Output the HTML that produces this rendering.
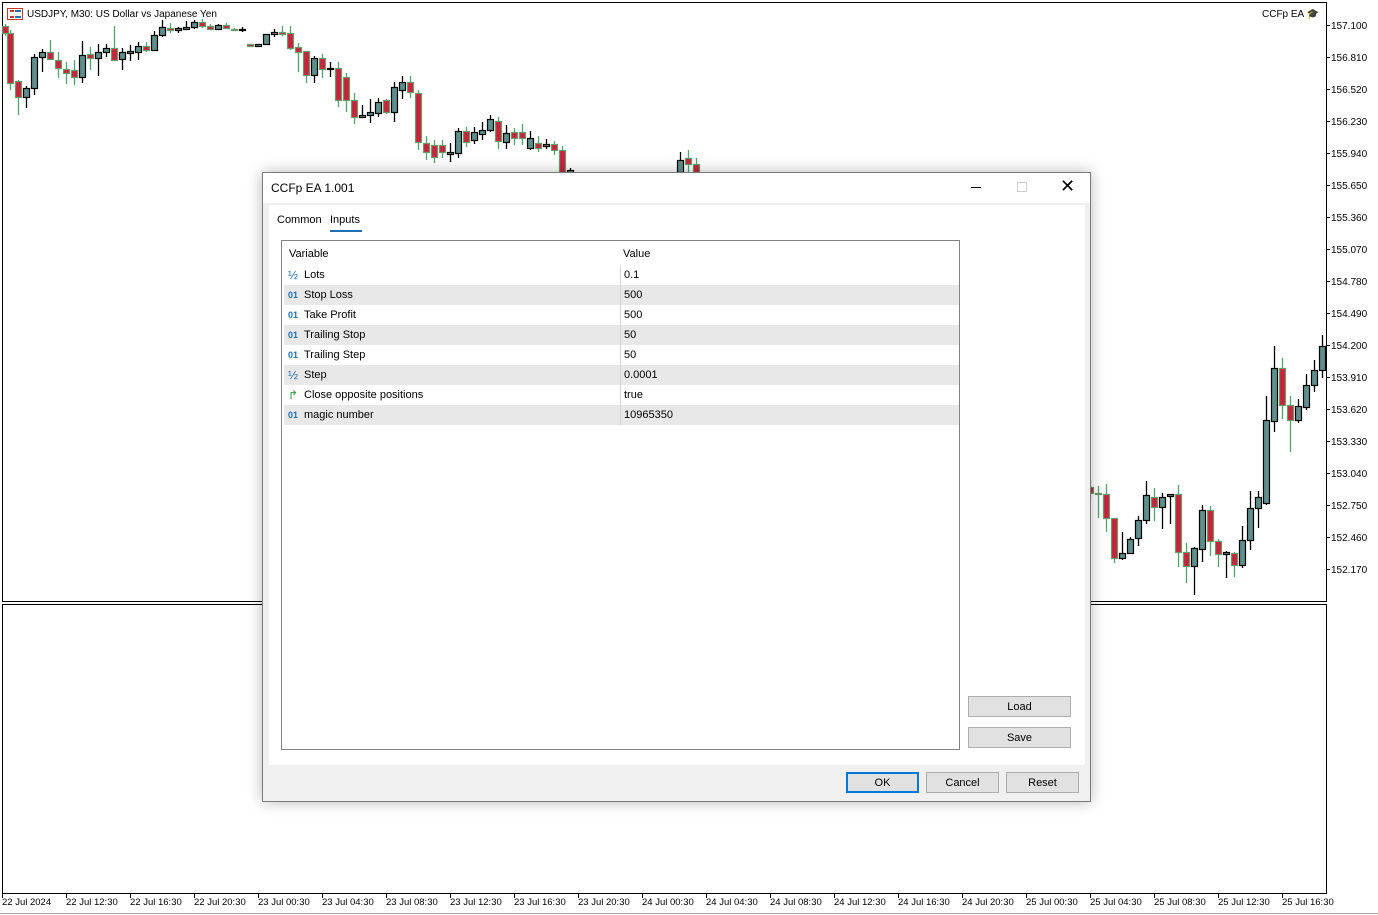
<!DOCTYPE html>
<html><head><meta charset="utf-8"><style>
*{margin:0;padding:0;box-sizing:border-box}
body{width:1378px;height:915px;background:#fff;position:relative;overflow:hidden;font-family:"Liberation Sans",sans-serif;color:#000}
.ax{position:absolute;font-size:10px;line-height:10px}
.dlg{position:absolute;left:262px;top:172px;width:829px;height:630px;background:#f0f0f0;border:1px solid #7a7a7a;box-shadow:0 0 14px rgba(0,0,0,.28)}
.tb{position:absolute;left:0;top:0;right:0;height:30px;background:#fff;font-size:12px}
.inner{position:absolute;left:6px;top:32px;width:816px;height:560px;background:#fff}
.tbl{position:absolute;left:12px;top:35px;width:679px;height:510px;border:1px solid #828282;background:#fff;font-size:11px}
.row{position:absolute;left:2px;width:675px;height:20px;line-height:21px}
.row.g{background:#e8e8e8}
.row span{position:absolute}
.row .v{left:336px;border-left:1px solid #d4d4d4;padding-left:3px;height:20px}
.ic{left:4px;color:#1f6fb5;font-size:9px;font-weight:bold}
.nm{left:20px}
.btn{position:absolute;height:21px;background:#e1e1e1;border:1px solid #adadad;font-size:11px;text-align:center;line-height:20px}
</style></head><body>
<svg width="1378" height="915" style="position:absolute;left:0;top:0">
<rect x="2.5" y="2.5" width="1324" height="599" fill="none" stroke="#000"/>
<rect x="2.5" y="604.5" width="1324" height="289" fill="none" stroke="#000"/>
<line x1="0" y1="913.5" x2="1378" y2="913.5" stroke="#aaa"/>
</svg>
<svg width="1378" height="915" style="position:absolute;left:0;top:0" id="cs"></svg>
<div class="ax" style="left:7px;top:8px;width:16px;height:12px;border:1px solid #c0392b;background:#fff"></div>
<div class="ax" style="left:10px;top:10px;width:4px;height:8px;border-top:2px solid #c0392b;border-bottom:2px solid #c0392b"></div>
<div class="ax" style="left:15px;top:10px;width:6px;height:8px;border-top:2px solid #1f6fb5;border-bottom:2px solid #1f6fb5"></div>
<div class="ax" style="left:27px;top:10px">USDJPY, M30:  US Dollar vs Japanese Yen</div>
<div class="ax" style="left:1262px;top:10px">CCFp EA <span style="color:#bbb">🎓</span></div>
<div id="yaxis"></div>
<div id="xaxis"></div>

<div class="dlg">
<div class="tb"><span style="position:absolute;left:8px;top:8px">CCFp EA 1.001</span>
<span style="position:absolute;left:708px;top:14px;width:10px;border-top:1px solid #000"></span>
<span style="position:absolute;left:754px;top:9px;width:10px;height:10px;border:1px solid #ccc"></span>
<span style="position:absolute;left:797px;top:3px;font-size:18px;font-weight:300">✕</span></div>
<div class="inner">
<span style="position:absolute;left:8px;top:9px;font-size:11px">Common</span>
<span style="position:absolute;left:61px;top:9px;font-size:11px">Inputs</span>
<span style="position:absolute;left:61px;top:25px;width:32px;border-top:2px solid #1f6fb5"></span>
<div class="tbl">
<div class="row" style="top:3px"><span style="left:5px">Variable</span><span class="v" style="border:none">Value</span></div>
<div class="row" style="top:24px"><span class="ic" style="font-size:12px;font-weight:normal">½</span><span class="nm">Lots</span><span class="v">0.1</span></div>
<div class="row g" style="top:44px"><span class="ic">01</span><span class="nm">Stop Loss</span><span class="v">500</span></div>
<div class="row" style="top:64px"><span class="ic">01</span><span class="nm">Take Profit</span><span class="v">500</span></div>
<div class="row g" style="top:84px"><span class="ic">01</span><span class="nm">Trailing Stop</span><span class="v">50</span></div>
<div class="row" style="top:104px"><span class="ic">01</span><span class="nm">Trailing Step</span><span class="v">50</span></div>
<div class="row g" style="top:124px"><span class="ic" style="font-size:12px;font-weight:normal">½</span><span class="nm">Step</span><span class="v">0.0001</span></div>
<div class="row" style="top:144px"><span class="ic" style="color:#2a9a3a;font-size:12px;font-weight:normal">↱</span><span class="nm">Close opposite positions</span><span class="v">true</span></div>
<div class="row g" style="top:164px"><span class="ic">01</span><span class="nm">magic number</span><span class="v">10965350</span></div>
</div>
</div>
<div class="btn" style="left:705px;top:523px;width:103px">Load</div>
<div class="btn" style="left:705px;top:554px;width:103px">Save</div>
<div class="btn" style="left:583px;top:599px;width:73px;border:2px solid #0078d7;line-height:18px">OK</div>
<div class="btn" style="left:663px;top:599px;width:73px">Cancel</div>
<div class="btn" style="left:743px;top:599px;width:73px">Reset</div>
</div>
<script>
var L=[[5,26,33,24,36,'r'],[10,33,83,30,90,'r'],[18,81,97,80,115,'r'],[26,88,97,86,108,'b'],[34,57,88,54,95,'b'],[42,52,57,49,72,'b'],[50,52,59,40,60,'r'],[58,60,68,52,78,'r'],[66,69,73,62,84,'r'],[74,70,77,60,85,'r'],[82,55,77,41,83,'b'],[90,54,58,47,70,'r'],[98,52,58,44,76,'b'],[106,48,52,44,57,'b'],[114,48,60,26,60,'r'],[122,52,59,48,70,'b'],[130,51,53,45,61,'b'],[138,46,52,42,60,'b'],[146,46,50,42,52,'r'],[154,35,50,31,51,'b'],[162,27,35,20,37,'b'],[170,28,30,23,33,'r'],[178,28,30,27,33,'b'],[186,27,29,21,29,'b'],[194,22,27,20,29,'b'],[202,22,26,19,28,'r'],[210,26,29,24,30,'r'],[218,25,29,24,30,'b'],[226,25,28,23,29,'r'],[234,29,30,28,30,'r'],[242,29,30,27,32,'b'],[250,44,46,44,46,'r'],[258,44,46,44,46,'b'],[266,34,44,34,44,'b'],[274,32,34,29,37,'b'],[282,32,34,26,36,'r'],[290,33,48,26,50,'r'],[298,47,52,43,72,'r'],[306,51,75,51,83,'r'],[314,58,75,56,83,'b'],[322,58,69,54,78,'r'],[330,68,69,62,77,'b'],[338,68,100,62,107,'r'],[346,77,100,73,112,'r'],[354,100,117,93,124,'r'],[362,115,117,105,117,'b'],[370,112,115,99,123,'b'],[378,102,113,98,117,'b'],[386,100,112,99,114,'r'],[394,87,112,82,122,'b'],[402,82,90,76,99,'b'],[410,82,92,76,98,'r'],[418,93,142,90,150,'r'],[426,143,152,136,160,'r'],[434,145,157,140,163,'r'],[442,145,152,140,158,'r'],[450,152,154,143,162,'b'],[458,131,153,128,158,'b'],[466,131,142,127,147,'r'],[474,132,140,127,144,'b'],[482,130,134,122,140,'b'],[490,119,130,115,132,'b'],[498,121,141,117,149,'r'],[506,133,142,125,149,'b'],[514,132,138,128,145,'r'],[522,132,138,124,145,'r'],[530,138,148,131,150,'b'],[538,143,148,136,152,'r'],[546,144,146,139,149,'b'],[554,144,150,141,155,'r'],[562,150,172,146,172,'r'],[570,170,172,168,172,'b'],[680,160,172,152,172,'b'],[688,158,164,150,172,'r'],[696,164,172,158,172,'r'],
[1090,487,493,480,500,'r'],[1098,493,494,486,518,'r'],[1106,494,518,484,532,'r'],[1114,518,558,518,563,'r'],[1122,553,558,532,560,'b'],[1130,539,553,537,547,'b'],[1138,520,538,516,546,'b'],[1146,495,520,481,524,'b'],[1154,497,507,488,521,'r'],[1162,497,507,493,529,'b'],[1170,494,496,494,524,'b'],[1178,494,552,485,567,'r'],[1186,552,566,543,583,'r'],[1194,548,566,547,595,'b'],[1202,510,549,505,562,'b'],[1210,510,541,506,556,'r'],[1218,541,554,539,567,'r'],[1226,552,554,551,578,'b'],[1234,553,565,552,577,'r'],[1242,540,565,526,568,'b'],[1250,508,540,491,550,'b'],[1258,497,508,491,528,'b'],[1266,420,503,396,505,'b'],[1274,368,421,346,432,'b'],[1282,368,405,358,419,'r'],[1290,405,420,396,452,'r'],[1298,406,420,399,423,'b'],[1306,385,407,374,410,'b'],[1314,370,385,360,392,'b'],[1322,346,370,335,378,'b']];
var s='';
L.forEach(function(c){var x=c[0],b=c[5]=='b';
s+='<line x1="'+(x+.5)+'" y1="'+c[3]+'" x2="'+(x+.5)+'" y2="'+c[4]+'" stroke="'+(b?'#000':'#4fa36d')+'" stroke-width="1.3"/>';
var h=Math.max(c[2]-c[1],1);
s+='<rect x="'+(x-2.5)+'" y="'+c[1]+'.5" width="6" height="'+h+'" fill="'+(b?'#5f8f8b':'#c8233c')+'" stroke="'+(b?'#000':'#6a9a6a')+'" stroke-width="1.2"/>';});
document.getElementById('cs').innerHTML=s;
var Y=['157.100','156.810','156.520','156.230','155.940','155.650','155.360','155.070','154.780','154.490','154.200','153.910','153.620','153.330','153.040','152.750','152.460','152.170'],t='';
Y.forEach(function(v,i){var y=25+i*32;t+='<div class="ax" style="left:1326px;top:'+y+'px;width:4px;border-top:1px solid #000"></div><div class="ax" style="left:1331px;top:'+(y-3)+'px">'+v+'</div>';});
document.getElementById('yaxis').innerHTML=t;
var X=['22 Jul 2024','22 Jul 12:30','22 Jul 16:30','22 Jul 20:30','23 Jul 00:30','23 Jul 04:30','23 Jul 08:30','23 Jul 12:30','23 Jul 16:30','23 Jul 20:30','24 Jul 00:30','24 Jul 04:30','24 Jul 08:30','24 Jul 12:30','24 Jul 16:30','24 Jul 20:30','25 Jul 00:30','25 Jul 04:30','25 Jul 08:30','25 Jul 12:30','25 Jul 16:30'],u='';
X.forEach(function(v,i){var x=2+i*64;u+='<div class="ax" style="left:'+x+'px;top:893px;height:5px;border-left:1px solid #000"></div><div class="ax" style="left:'+x+'px;top:898px;font-size:9.5px">'+v+'</div>';});
document.getElementById('xaxis').innerHTML=u;
</script>
</body></html>
